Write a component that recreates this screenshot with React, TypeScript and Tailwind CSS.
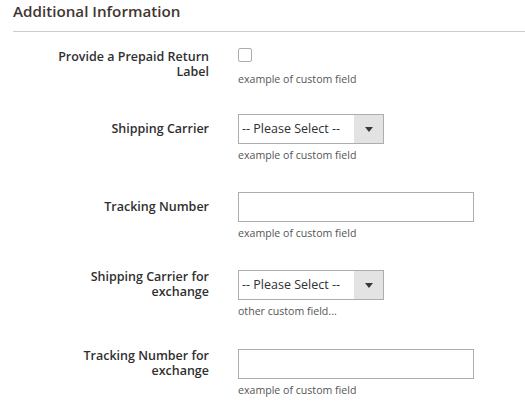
import React from 'react';

function Helper({ children }: { children: React.ReactNode }) {
  return <div className="mt-1 text-[10.6px] leading-[14px] text-[#555]">{children}</div>;
}

function Label({ lines, top }: { lines: string[]; top?: boolean }) {
  return (
    <div
      className={
        top
          ? 'pt-[8px] text-right text-[12.5px] font-semibold leading-[15px] text-[#303030]'
          : 'flex h-[30px] flex-col justify-center pb-[2px] text-right text-[12.5px] font-semibold leading-[15px] text-[#303030]'
      }
    >
      {lines.map((l) => (
        <div key={l} className="whitespace-nowrap">
          {l}
        </div>
      ))}
    </div>
  );
}

function SelectBox() {
  return (
    <div className="flex h-[30px] w-[146px] border border-[#adadad] bg-white">
      <div className="flex flex-1 items-center pl-[3px] text-[12.5px] text-[#303030]">-- Please Select --</div>
      <div className="flex w-[29px] items-center justify-center bg-[#e3e3e3]">
        <svg width="8" height="5" viewBox="0 0 8 5">
          <polygon points="0,0 8,0 4,5" fill="#41362f" />
        </svg>
      </div>
    </div>
  );
}

function TextBox() {
  return <div className="h-[30px] w-[236px] border border-[#adadad] bg-white" />;
}

export default function App() {
  return (
    <div className="min-h-screen bg-white" style={{ fontFamily: '"Open Sans", sans-serif' }}>
      <div className="pl-[13px]">
        <h2 className="border-b border-[#cccccc] pb-[9px] text-[15.2px] font-semibold leading-[22px] text-[#41362f]">
          Additional Information
        </h2>
      </div>

      <div className="mt-[9px] grid grid-cols-[209px_1fr] gap-x-[29px]">
        {/* prepaid label */}
        <Label top lines={['Provide a Prepaid Return', 'Label']} />
        <div>
          <div className="mt-[7px] h-[14px] w-[14px] rounded-[2px] border border-[#adadad] bg-white" />
          <div className="mt-[10px] text-[10.6px] leading-[14px] text-[#555]">example of custom field</div>
        </div>

        <div className="col-span-2 h-[28px]" />

        <Label lines={['Shipping Carrier']} />
        <div>
          <SelectBox />
          <Helper>example of custom field</Helper>
        </div>

        <div className="col-span-2 h-[30px]" />

        <Label lines={['Tracking Number']} />
        <div>
          <TextBox />
          <Helper>example of custom field</Helper>
        </div>

        <div className="col-span-2 h-[30px]" />

        <Label lines={['Shipping Carrier for', 'exchange']} />
        <div>
          <SelectBox />
          <Helper>other custom field...</Helper>
        </div>

        <div className="col-span-2 h-[31px]" />

        <Label lines={['Tracking Number for', 'exchange']} />
        <div>
          <TextBox />
          <Helper>example of custom field</Helper>
        </div>
      </div>
    </div>
  );
}
